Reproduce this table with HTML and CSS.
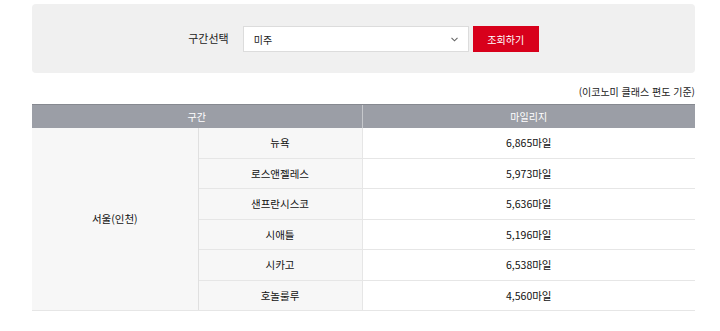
FILE: index.html
```html
<!DOCTYPE html>
<html lang="ko">
<head>
<meta charset="utf-8">
<title>마일리지</title>
<link rel="stylesheet" href="styles.css">
</head>
<body>
<div class="wrap">
  <div class="search">
    <span class="search-label">구간선택</span>
    <div class="select">
      <span class="select-value">미주</span>
      <svg class="select-arrow" width="7" height="5" viewBox="0 0 7 5"><path d="M0.5 0.8 L3.5 3.8 L6.5 0.8" fill="none" stroke="#666" stroke-width="1.1"/></svg>
    </div>
    <button class="btn">조회하기</button>
  </div>
  <p class="note">(이코노미 클래스 편도 기준)</p>
  <table class="mile">
    <colgroup>
      <col class="c1"><col class="c2"><col class="c3">
    </colgroup>
    <thead>
      <tr><th colspan="2">구간</th><th class="th-last">마일리지</th></tr>
    </thead>
    <tbody>
      <tr><td class="origin" rowspan="6">서울(인천)</td><td class="dest">뉴욕</td><td class="val">6,865마일</td></tr>
      <tr><td class="dest">로스앤젤레스</td><td class="val">5,973마일</td></tr>
      <tr><td class="dest">샌프란시스코</td><td class="val">5,636마일</td></tr>
      <tr><td class="dest">시애틀</td><td class="val">5,196마일</td></tr>
      <tr><td class="dest">시카고</td><td class="val">6,538마일</td></tr>
      <tr><td class="dest">호놀룰루</td><td class="val">4,560마일</td></tr>
    </tbody>
  </table>
</div>
</body>
</html>
```
FILE: styles.css
```css
* { box-sizing: border-box; }
body {
  margin: 0;
  background: #fff;
  font-family: "Noto Sans CJK KR", "Noto Sans", sans-serif;
  color: #333;
}
.wrap {
  width: 663px;
  margin: 4px 0 0 32px;
}
.search {
  height: 69px;
  background: #f0f0f0;
  border-radius: 4px;
  display: flex;
  align-items: center;
  justify-content: center;
  padding-top: 1px;
}
.search-label {
  font-size: 11px;
  color: #222;
  margin-right: 14px;
  margin-top: -2px;
}
.select {
  width: 226px;
  height: 26px;
  background: #fff;
  border: 1px solid #dcdcdc;
  display: flex;
  align-items: center;
  justify-content: space-between;
  padding: 0 10px 0 10px;
}
.select-value {
  font-size: 10px;
  color: #222;
}
.select-arrow { display: block; }
.btn {
  width: 66px;
  height: 26px;
  margin-left: 4px;
  border: 0;
  background: #d8001b;
  color: #fff;
  font-family: inherit;
  font-size: 10px;
  padding: 0;
}
.note {
  margin: 0;
  padding: 12px 0 5px;
  line-height: 14px;
  font-size: 10px;
  text-align: right;
  color: #222;
}
.mile {
  width: 663px;
  border-collapse: collapse;
  table-layout: fixed;
}
.c1 { width: 166px; }
.c2 { width: 164px; }
.c3 { width: 333px; }
.mile th {
  height: 23px;
  background: #9b9ea6;
  border-top: 1px solid #868990;
  color: #fff;
  font-size: 10px;
  font-weight: normal;
  padding: 0;
  text-align: center;
}
.mile th.th-last { border-left: 1px solid #c6c8cc; }
.mile td {
  height: 30.5px;
  padding: 0;
  text-align: center;
  font-size: 10.5px;
  color: #111;
  border-bottom: 1px solid #e6e6e6;
}
.mile td.origin {
  background: #f7f7f7;
  border-right: 1px solid #e0e0e0;
}
.mile td.dest {
  background: #f7f7f7;
  border-right: 1px solid #e6e6e6;
}
.mile td.val { background: #fff; }
```
